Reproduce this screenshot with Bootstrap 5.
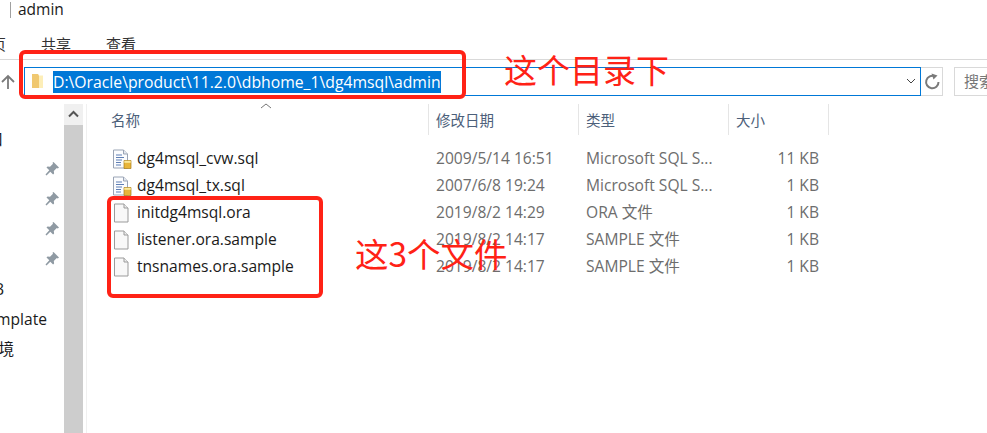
<!doctype html>
<html lang="zh"><head><meta charset="utf-8">
<link href="https://cdn.jsdelivr.net/npm/bootstrap@5.3.0/dist/css/bootstrap.min.css" rel="stylesheet">
<style>
html,body{height:433px;overflow:hidden;background:#fff}
body{font-family:"Open Sans","Noto Sans CJK SC",sans-serif;font-size:15.6px;color:#1a1a1a;line-height:1.2}
.title-row{height:20px;padding-left:10px}
.title-sep{width:1px;height:16px;background:#a0a0a0;margin:2px 7px 0 0}
.title-txt{font-size:15.5px;line-height:19px}
.ribbon{height:40px;padding-top:15px;border-bottom:1px solid #d9d9d9}
.rtab{white-space:nowrap;line-height:18px;font-size:15px;color:#333}
.rtab-home{width:6px;overflow:hidden;direction:rtl;margin-right:35px;flex:none}
.rtab-share{margin-right:35px}
.addr-row{height:36px;padding-top:7px}
.up-wrap{width:24px;flex:none;padding-left:1px;padding-top:7px;line-height:0}
.addr-box{width:897px;flex:none;height:29px;border:1px solid #0078d7;padding-left:6px}
.folder-ico{flex:none;margin-top:5px}
.sel-path{background:#0078d7;color:#fff;margin-left:9px;width:388px;flex:none;font-size:15.75px;line-height:22px;height:22px;margin-top:3px;white-space:nowrap}
.chev{margin:8px 4px 0 auto;line-height:0}
.refresh-box{width:22px;flex:none;height:29px;border:1px solid #d9d9d9;border-left:0}
.search-box{width:33px;flex:none;height:29px;border:1px solid #d9d9d9;border-width:1px 0 1px 1px;margin-left:11px;padding-left:9px;color:#777;font-size:15px;line-height:27px;white-space:nowrap;overflow:hidden}
.main-area{height:337px;padding-top:8px}
.side-col{width:64px;flex:none;overflow:hidden;padding-top:20px}
.side-item{height:30px;line-height:30px;white-space:nowrap;color:#1a1a1a;flex:none}
.si-box{padding-right:61px}
.si-db{padding-right:60px}
.si-tpl{padding-right:17px}
.si-env{padding-right:50px}
.side-item.pinrow{padding-right:4px;padding-top:7px;line-height:0}
.sbar{width:19px;flex:none;background:#cdcdcd}
.sbar-btn{height:21px;background:#f0f0f0;padding:6px 0 0 4px;line-height:0}
.list-wrap{flex:1;min-width:0;margin-left:3px;border-left:1px solid #f0f0f0}
.hdr{height:31px;color:#4c607a;font-size:14.5px}
.hcell{border-right:1px solid #e5e5e5;padding-top:8px;position:relative;line-height:18px;flex:none}
.c-name{width:342px;padding-left:24px}
.c-date,.c-type{width:150px;padding-left:7px}
.c-size{width:100px;padding-left:7px}
.sort-mark{position:absolute;left:173px;top:-1px;line-height:0}
.rows{padding-top:10px}
.frow{height:27px;line-height:27px;color:#6d6d6d;white-space:nowrap}
.f-name{width:342px;flex:none;color:#1a1a1a;padding-left:25px;gap:5px}
.f-date,.f-type{width:150px;flex:none;padding-left:7px}
.f-size{width:90px;flex:none;text-align:right}
.fico{flex:none}
.note-box{position:absolute;border:4px solid #ff2216;border-radius:6px}
.note-a{left:19px;top:50px;width:447px;height:49px}
.note-b{left:107px;top:196px;width:216px;height:102px}
.note-txt{position:absolute;color:#ff2216;font-family:"Noto Sans CJK SC",sans-serif;line-height:1;white-space:nowrap;font-weight:400}
.nt-a{left:504px;top:53px;font-size:33px}
.nt-b{left:355px;top:236px;font-size:33.5px}
</style></head>
<body class="position-relative">
<svg width="0" height="0" class="position-absolute">
<defs>
<symbol id="sql" viewBox="0 0 20 20">
<path d="M1.500 1h10l4 4v14h-14z" fill="#fbfcfe" stroke="#9aa4b5"/>
<path d="M11.500 1v4h4" fill="#e3e8f0" stroke="#9aa4b5"/>
<path d="M4 6h6M4 8.500h8M4 11h6M4 13.500h5M4 16h5" stroke="#5f7fb5" stroke-width="1.200"/>
<path d="M12 11.500h7v8h-7z" fill="#e8b53a" stroke="#a67c1a" stroke-width=".7"/>
<path d="M12.300 11.800h6.400v2h-6.400z" fill="#fbe99a"/>
</symbol>
<symbol id="doc" viewBox="0 0 20 20">
<path d="M2.500 1h9.500l4 4v14h-13.500z" fill="#f8f8f8" stroke="#9b9b9b"/>
<path d="M12 1v4h4" fill="#ececec" stroke="#9b9b9b"/>
</symbol>
<symbol id="pin" viewBox="0 0 16 16">
<path d="M9.500 1l5.500 5.500-1.200 1-1-.5-3 3 .3 2.500-1 1-2.800-2.800L2.500 14.500l-1-1 3.800-4.200L2.500 6.500l1-1 2.500.3 3-3-.5-1z" fill="#8f9aa3"/>
</symbol>
</defs>
</svg>
<div class="title-row d-flex"><div class="title-sep"></div><div class="title-txt">admin</div></div>
<div class="ribbon d-flex">
<div class="rtab rtab-home">主页</div>
<div class="rtab rtab-share">共享</div>
<div class="rtab">查看</div>
</div>
<div class="addr-row d-flex">
<div class="up-wrap"><svg width="14" height="16" viewBox="0 0 14 16"><path d="M7 2v13M1 8l6-6 6 6" fill="none" stroke="#7a7a7a" stroke-width="1.800"/></svg></div>
<div class="addr-box d-flex">
<svg class="folder-ico" width="13" height="16" viewBox="0 0 13 16"><path d="M1 1h6l1 1.500V15H1z" fill="#f0c870"/><path d="M8 2.500h4V15H8z" fill="#fdeeb8"/></svg>
<div class="sel-path">D:\Oracle\product\11.2.0\dbhome_1\dg4msql\admin</div>
<div class="chev"><svg width="10" height="10" viewBox="0 0 10 10"><path d="M1 3l4 4 4-4" fill="none" stroke="#444"/></svg></div>
</div>
<div class="refresh-box d-flex align-items-center justify-content-center"><svg width="16" height="17" viewBox="0 0 16 17"><path d="M11 3.500A6.200 6.200 0 1 0 14.500 9" fill="none" stroke="#7a7a7a" stroke-width="2"/><path d="M7.500 .5l6 2-4 4z" fill="#7a7a7a"/></svg></div>
<div class="search-box">搜索"admin"</div>
</div>
<div class="main-area d-flex">
<div class="side-col d-flex flex-column align-items-end">
<div class="side-item si-box">口</div>
<div class="side-item pinrow"><svg width="16" height="16"><use href="#pin"/></svg></div>
<div class="side-item pinrow"><svg width="16" height="16"><use href="#pin"/></svg></div>
<div class="side-item pinrow"><svg width="16" height="16"><use href="#pin"/></svg></div>
<div class="side-item pinrow"><svg width="16" height="16"><use href="#pin"/></svg></div>
<div class="side-item si-db">DB</div>
<div class="side-item si-tpl">Template</div>
<div class="side-item si-env">环境</div>
</div>
<div class="sbar"><div class="sbar-btn"><svg width="11" height="8" viewBox="0 0 11 8"><path d="M1 6.500l4.500-4.500 4.500 4.500" fill="none" stroke="#555" stroke-width="2"/></svg></div></div>
<div class="list-wrap">
<div class="hdr d-flex">
<div class="hcell c-name">名称<span class="sort-mark"><svg width="12" height="6" viewBox="0 0 12 6"><path d="M1 5l5-4 5 4" fill="none" stroke="#777"/></svg></span></div>
<div class="hcell c-date">修改日期</div>
<div class="hcell c-type">类型</div>
<div class="hcell c-size">大小</div>
</div>
<div class="rows">
<div class="frow d-flex"><div class="f-name d-flex align-items-center"><svg class="fico" width="20" height="20"><use href="#sql"/></svg><span>dg4msql_cvw.sql</span></div><div class="f-date">2009/5/14 16:51</div><div class="f-type">Microsoft SQL S...</div><div class="f-size">11 KB</div></div>
<div class="frow d-flex"><div class="f-name d-flex align-items-center"><svg class="fico" width="20" height="20"><use href="#sql"/></svg><span>dg4msql_tx.sql</span></div><div class="f-date">2007/6/8 19:24</div><div class="f-type">Microsoft SQL S...</div><div class="f-size">1 KB</div></div>
<div class="frow d-flex"><div class="f-name d-flex align-items-center"><svg class="fico" width="20" height="20"><use href="#doc"/></svg><span>initdg4msql.ora</span></div><div class="f-date">2019/8/2 14:29</div><div class="f-type">ORA 文件</div><div class="f-size">1 KB</div></div>
<div class="frow d-flex"><div class="f-name d-flex align-items-center"><svg class="fico" width="20" height="20"><use href="#doc"/></svg><span>listener.ora.sample</span></div><div class="f-date">2019/8/2 14:17</div><div class="f-type">SAMPLE 文件</div><div class="f-size">1 KB</div></div>
<div class="frow d-flex"><div class="f-name d-flex align-items-center"><svg class="fico" width="20" height="20"><use href="#doc"/></svg><span>tnsnames.ora.sample</span></div><div class="f-date">2019/8/2 14:17</div><div class="f-type">SAMPLE 文件</div><div class="f-size">1 KB</div></div>
</div>
</div>
</div>
<div class="note-box note-a"></div>
<div class="note-box note-b"></div>
<div class="note-txt nt-a">这个目录下</div>
<div class="note-txt nt-b">这3个文件</div>
</body></html>
